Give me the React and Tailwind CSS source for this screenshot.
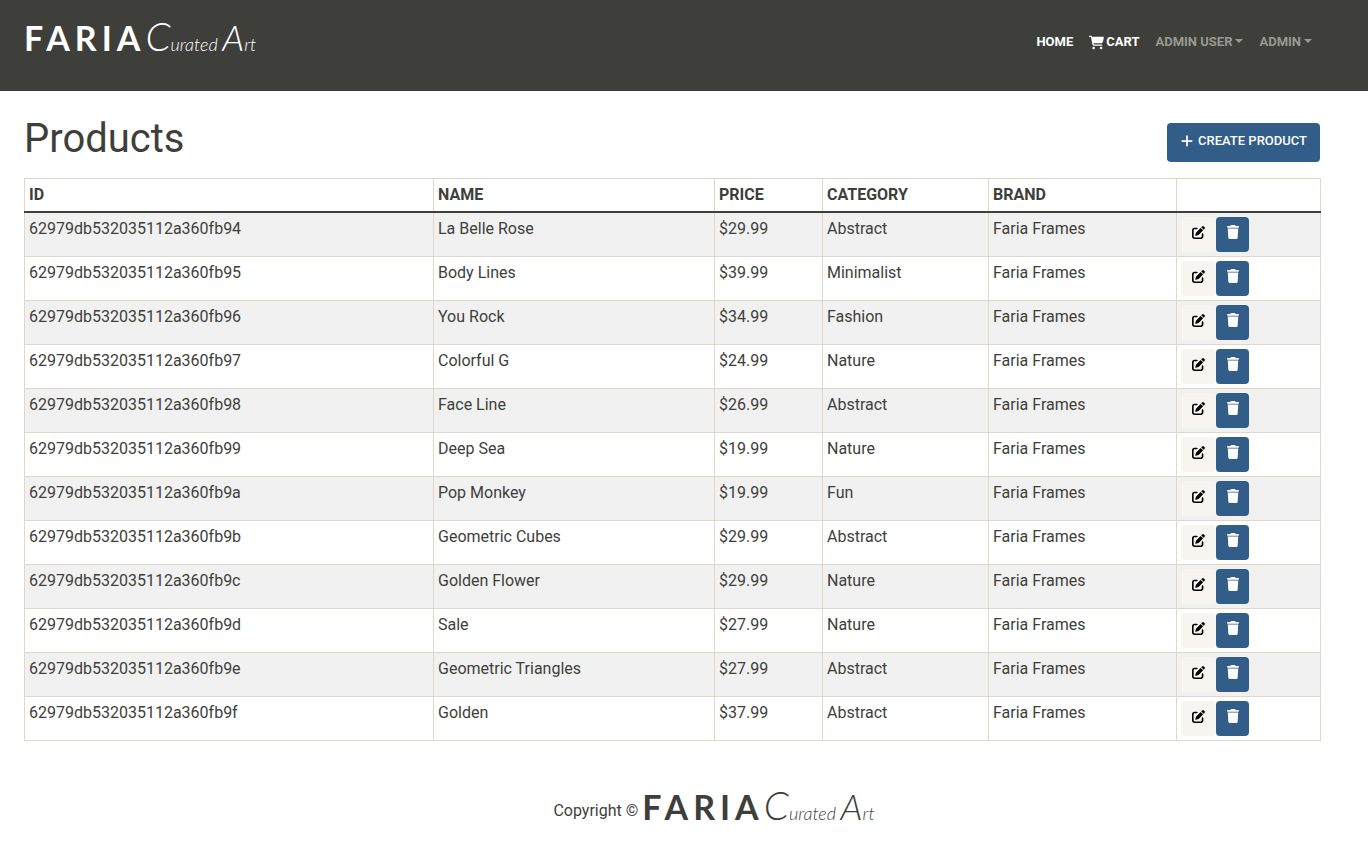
import { FaCartShopping, FaPenToSquare, FaPlus, FaTrash } from "react-icons/fa6";

const products = [
  ["62979db532035112a360fb94", "La Belle Rose", "29.99", "Abstract"],
  ["62979db532035112a360fb95", "Body Lines", "39.99", "Minimalist"],
  ["62979db532035112a360fb96", "You Rock", "34.99", "Fashion"],
  ["62979db532035112a360fb97", "Colorful G", "24.99", "Nature"],
  ["62979db532035112a360fb98", "Face Line", "26.99", "Abstract"],
  ["62979db532035112a360fb99", "Deep Sea", "19.99", "Nature"],
  ["62979db532035112a360fb9a", "Pop Monkey", "19.99", "Fun"],
  ["62979db532035112a360fb9b", "Geometric Cubes", "29.99", "Abstract"],
  ["62979db532035112a360fb9c", "Golden Flower", "29.99", "Nature"],
  ["62979db532035112a360fb9d", "Sale", "27.99", "Nature"],
  ["62979db532035112a360fb9e", "Geometric Triangles", "27.99", "Abstract"],
  ["62979db532035112a360fb9f", "Golden", "37.99", "Abstract"],
];

const headCell = "border border-b-2 border-[#dfd7ca] border-b-[#3e3f3a] p-1";
const cell = "border border-[#dfd7ca] p-1 align-top";

function Logo() {
  return (
    <span className="flex items-baseline whitespace-nowrap font-['Lato',sans-serif] leading-none">
      <span className="text-[34px] font-bold tracking-[5px]">FARIA</span>
      <span className="text-[18px] font-light italic">
        <span className="text-[40px]">C</span>urated <span className="text-[36px]">A</span>rt
      </span>
    </span>
  );
}

function Caret() {
  return (
    <span className="ml-[3px] inline-block border-x-4 border-t-4 border-x-transparent border-t-current align-[3px]" />
  );
}

function Header() {
  return (
    <header className="flex min-h-[91px] flex-wrap items-start justify-between bg-[#3e3f3a] pl-6 pr-12 pt-4">
      <a href="#home" className="text-white">
        <Logo />
      </a>
      <nav className="flex items-center gap-4 pr-2 pt-4 text-[13px] leading-5 font-bold uppercase text-white">
        <a href="#home">Home</a>
        <a href="#cart" className="flex items-center gap-[2px]">
          <FaCartShopping className="size-[15px]" />
          Cart
        </a>
        <button type="button" className="font-bold uppercase text-[#989894]">
          Admin User
          <Caret />
        </button>
        <button type="button" className="font-bold uppercase text-[#989894]">
          Admin
          <Caret />
        </button>
      </nav>
    </header>
  );
}

export default function App() {
  return (
    <div className="min-h-screen bg-white font-['Roboto',sans-serif] text-base text-[#3e3f3a]">
      <Header />
      <main className="pl-6 pr-12 pt-6">
        <div className="flex items-start justify-between">
          <h1 className="text-[40px] leading-[48px]">Products</h1>
          <button
            type="button"
            className="mt-2 flex h-[39px] items-center gap-1 rounded bg-[#325d88] px-[13px] pb-1 text-[13px] font-medium uppercase text-white"
          >
            <FaPlus className="size-[14px]" />
            Create Product
          </button>
        </div>
        <table className="mt-[15px] w-full table-fixed border-collapse text-left leading-6">
          <thead>
            <tr>
              <th className={`${headCell} w-[409px]`}>ID</th>
              <th className={`${headCell} w-[281px]`}>NAME</th>
              <th className={`${headCell} w-[108px]`}>PRICE</th>
              <th className={`${headCell} w-[166px]`}>CATEGORY</th>
              <th className={`${headCell} w-[188px]`}>BRAND</th>
              <th className={`${headCell} w-[144px]`} aria-label="Actions" />
            </tr>
          </thead>
          <tbody>
            {products.map(([id, name, price, category]) => (
              <tr key={id} className="odd:bg-[#f1f1f1]">
                <td className={cell}>{id}</td>
                <td className={cell}>{name}</td>
                <td className={cell}>${price}</td>
                <td className={cell}>{category}</td>
                <td className={cell}>Faria Frames</td>
                <td className={cell}>
                  <div className="flex">
                    <button
                      type="button"
                      aria-label={`Edit ${name}`}
                      className="flex h-[35px] w-[35px] items-center justify-center rounded bg-[#f8f5f0] pb-[5px] text-black"
                    >
                      <FaPenToSquare className="size-[13px]" />
                    </button>
                    <button
                      type="button"
                      aria-label={`Delete ${name}`}
                      className="flex h-[35px] w-[33px] items-center justify-center rounded bg-[#325d88] pb-[5px] text-white"
                    >
                      <FaTrash className="size-[14px]" />
                    </button>
                  </div>
                </td>
              </tr>
            ))}
          </tbody>
        </table>
      </main>
      <footer className="flex items-start justify-center gap-1 pl-[60px] pt-11 pb-8">
        <span className="pt-[14px] leading-6">Copyright ©</span>
        <Logo />
      </footer>
    </div>
  );
}
